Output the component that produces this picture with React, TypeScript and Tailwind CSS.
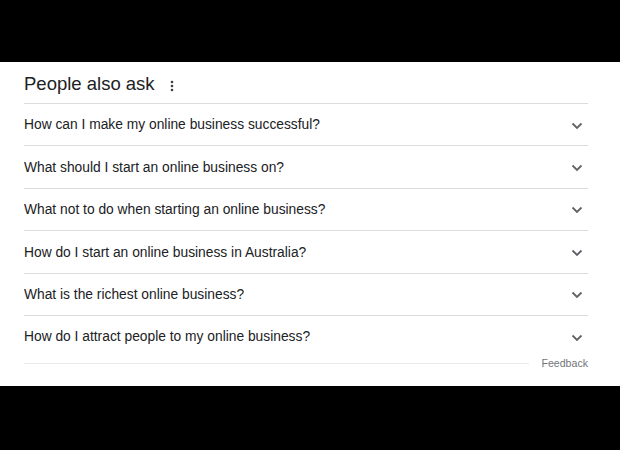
import React from "react";

const questions = [
  "How can I make my online business successful?",
  "What should I start an online business on?",
  "What not to do when starting an online business?",
  "How do I start an online business in Australia?",
  "What is the richest online business?",
  "How do I attract people to my online business?",
];

function Chevron() {
  return (
    <svg width="12" height="8" viewBox="0 0 12 8">
      <path d="M1.5 1.5 6 6l4.5-4.5" fill="none" stroke="#5f6368" strokeWidth="1.8" />
    </svg>
  );
}

export default function App() {
  return (
    <div className="w-[620px] h-[450px] bg-black flex flex-col" style={{ fontFamily: "'Liberation Sans', Arial, sans-serif" }}>
      <div className="h-[62px] shrink-0" />
      <div className="bg-white h-[324px] shrink-0 px-[24px] pr-[32px] flex flex-col">
        <div className="h-[41px] flex items-end pb-[10px] gap-[12px]">
          <span className="text-[18.5px] leading-none text-[#202124]">People also ask</span>
          <svg width="4" height="12" viewBox="0 0 4 12" className="mb-[1px] ml-[3px]">
            <circle cx="2" cy="2" r="1.3" fill="#3c4043" />
            <circle cx="2" cy="6" r="1.3" fill="#3c4043" />
            <circle cx="2" cy="10" r="1.3" fill="#3c4043" />
          </svg>
        </div>
        {questions.map((q) => (
          <div key={q} className="h-[42.4px] border-t border-[#dadce0] flex items-center justify-between pt-[2px]">
            <span className="text-[13.8px] text-[#202124]">{q}</span>
            <span className="mr-[5px] flex items-center"><Chevron /></span>
          </div>
        ))}
        <div className="flex items-center gap-[12px] mt-[1px]">
          <div className="flex-1 border-t border-[#e8eaed]" />
          <span className="text-[10.6px] text-[#70757a] leading-none">Feedback</span>
        </div>
      </div>
      <div className="flex-1" />
    </div>
  );
}
